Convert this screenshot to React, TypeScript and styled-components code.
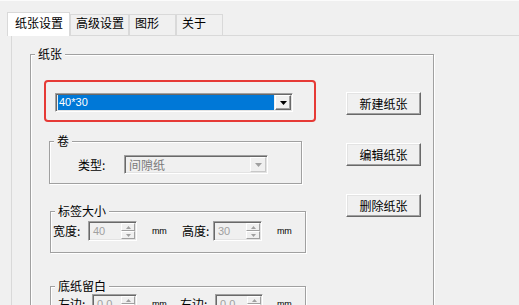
import React from 'react';
import styled, { createGlobalStyle } from 'styled-components';

const CJK = `"Noto Sans CJK SC", "Noto Sans", sans-serif`;
const LATIN = `"Liberation Sans", Arial, sans-serif`;

const GlobalStyle = createGlobalStyle`
  html, body { margin: 0; padding: 0; background: #f0f0f0; }
  body { overflow: hidden; }
`;

const Window = styled.div`
  width: 519px;
  height: 305px;
  overflow: hidden;
  box-sizing: border-box;
  border-top: 1px solid #fbfbfb;
  background: #f0f0f0;
  font-family: ${CJK};
  font-size: 12px;
  line-height: 12px;
  color: #000;
`;

const TabStrip = styled.div`
  display: flex;
  align-items: flex-end;
  height: 34px;
  padding-left: 9px;
  box-sizing: border-box;
`;

const Tab = styled.div<{ $active?: boolean }>`
  box-sizing: border-box;
  height: ${(p) => (p.$active ? 24 : 21)}px;
  min-width: 47px;
  padding: ${(p) => (p.$active ? '4px 6px 0 7px' : '2px 4px 0 5px')};
  margin: ${(p) => (p.$active ? '0 0 -1px -2px' : '0')};
  border: 1px solid #d9d9d9;
  border-bottom: none;
  background: ${(p) => (p.$active ? '#ffffff' : '#f0f0f0')};
  position: relative;
  z-index: ${(p) => (p.$active ? 1 : 0)};
  white-space: nowrap;
`;

const Panel = styled.div`
  margin-left: 11px;
  border-top: 1px solid #d9d9d9;
  border-left: 1px solid #d9d9d9;
  padding: 18px 0 0 18px;
  height: 300px;
`;

const Group = styled.div<{ $w: number; $h: number; $mt?: number; $ml?: number }>`
  position: relative;
  box-sizing: border-box;
  flex: none;
  width: ${(p) => p.$w}px;
  height: ${(p) => p.$h}px;
  margin: ${(p) => p.$mt ?? 0}px 0 0 ${(p) => p.$ml ?? 0}px;
  border: 1px solid #a0a0a0;
  box-shadow: inset 1px 1px 0 #ffffff, 1px 1px 0 #ffffff;
`;

const Legend = styled.div`
  position: absolute;
  top: -7px;
  left: 4px;
  padding: 0 3px;
  background: #f0f0f0;
  line-height: 12px;
  white-space: nowrap;
`;

const PaperBody = styled.div`
  display: flex;
  padding: 25px 0 0 13px;
`;

const LeftCol = styled.div`
  width: 272px;
  display: flex;
  flex-direction: column;
`;

const RightCol = styled.div`
  margin-left: 30px;
  padding-top: 12px;
  display: flex;
  flex-direction: column;
  gap: 28px;
`;

const Highlight = styled.div`
  box-sizing: border-box;
  width: 272px;
  height: 42px;
  border: 2px solid #e63a36;
  border-radius: 4px;
  padding: 11px 0 0 9px;
`;

const Combo = styled.div<{ $w: number }>`
  box-sizing: border-box;
  width: ${(p) => p.$w}px;
  height: 19px;
  flex: none;
  display: flex;
  border: 1px solid;
  border-color: #a0a0a0 #ffffff #ffffff #a0a0a0;
  box-shadow: inset 1px 1px 0 #696969, inset -1px -1px 0 #e3e3e3;
  padding: 1px 1px 1px 2px;
  background: #f0f0f0;
`;

const Selection = styled.div`
  flex: 1;
  background: #0078d7;
  color: #ffffff;
  font-family: ${LATIN};
  font-size: 11px;
  line-height: 15px;
  padding-left: 1px;
`;

const ComboText = styled.div`
  flex: 1;
  color: #7a7a7a;
  line-height: 15px;
  padding-left: 2px;
`;

const DropBtn = styled.div<{ $disabled?: boolean }>`
  box-sizing: border-box;
  width: 16px;
  margin-left: 1px;
  display: flex;
  align-items: center;
  justify-content: center;
  background: #f0f0f0;
  border: 1px solid;
  border-color: ${(p) =>
    p.$disabled ? '#ffffff #c8c8c8 #c8c8c8 #ffffff' : '#ffffff #696969 #696969 #ffffff'};
  box-shadow: ${(p) => (p.$disabled ? 'none' : 'inset -1px -1px 0 #a0a0a0')};
`;

const FieldRow = styled.div<{ $pt: number; $pl: number }>`
  display: flex;
  align-items: center;
  padding: ${(p) => p.$pt}px 0 0 ${(p) => p.$pl}px;
`;

const FieldLabel = styled.div<{ $w: number }>`
  width: ${(p) => p.$w}px;
  flex: none;
  white-space: nowrap;
`;

const Spin = styled.div<{ $w: number }>`
  box-sizing: border-box;
  width: ${(p) => p.$w}px;
  height: 20px;
  flex: none;
  display: flex;
  border: 1px solid;
  border-color: #a0a0a0 #ffffff #ffffff #a0a0a0;
  box-shadow: inset 1px 1px 0 #696969, inset -1px -1px 0 #e3e3e3;
  padding: 1px;
  background: #f0f0f0;
`;

const SpinValue = styled.div`
  flex: 1;
  display: flex;
  align-items: center;
  padding-left: 3px;
  font-family: ${LATIN};
  font-size: 11px;
  color: #a0a0a0;
`;

const SpinButtons = styled.div`
  width: 14px;
  display: flex;
  flex-direction: column;
`;

const SpinBtn = styled.div`
  flex: 1;
  box-sizing: border-box;
  display: flex;
  align-items: center;
  justify-content: center;
  border: 1px solid;
  border-color: #ffffff #a0a0a0 #a0a0a0 #ffffff;
  background: #f0f0f0;
`;

const Unit = styled.div<{ $ml: number; $w: number }>`
  margin-left: ${(p) => p.$ml}px;
  width: ${(p) => p.$w}px;
  flex: none;
  font-family: ${LATIN};
  font-size: 9px;
  letter-spacing: -0.2px;
`;

const Button = styled.div`
  box-sizing: border-box;
  width: 75px;
  height: 23px;
  display: flex;
  align-items: center;
  justify-content: center;
  background: #f0f0f0;
  border: 1px solid;
  border-color: #ffffff #696969 #696969 #ffffff;
  box-shadow: inset -1px -1px 0 #a0a0a0, inset 1px 1px 0 #e3e3e3;
  white-space: nowrap;
`;

const DownArrow = ({ color }: { color: string }) => (
  <svg width="7" height="4" viewBox="0 0 7 4">
    <path d="M0 0H7L3.5 4Z" fill={color} />
  </svg>
);

const TinyArrow = ({ up }: { up?: boolean }) => (
  <svg width="5" height="3" viewBox="0 0 5 3">
    <path d={up ? 'M0 3H5L2.5 0Z' : 'M0 0H5L2.5 3Z'} fill="#a0a0a0" />
  </svg>
);

const SpinBox = ({ w, value }: { w: number; value: string }) => (
  <Spin $w={w}>
    <SpinValue>{value}</SpinValue>
    <SpinButtons>
      <SpinBtn>
        <TinyArrow up />
      </SpinBtn>
      <SpinBtn>
        <TinyArrow />
      </SpinBtn>
    </SpinButtons>
  </Spin>
);

export default function App() {
  return (
    <>
      <GlobalStyle />
      <Window>
        <TabStrip>
          <Tab $active>纸张设置</Tab>
          <Tab>高级设置</Tab>
          <Tab>图形</Tab>
          <Tab>关于</Tab>
        </TabStrip>
        <Panel>
          <Group $w={404} $h={300}>
            <Legend>纸张</Legend>
            <PaperBody>
              <LeftCol>
                <Highlight>
                  <Combo $w={238}>
                    <Selection>40*30</Selection>
                    <DropBtn>
                      <DownArrow color="#000" />
                    </DropBtn>
                  </Combo>
                </Highlight>

                <Group $w={253} $h={43} $mt={19} $ml={5}>
                  <Legend>卷</Legend>
                  <FieldRow $pt={13} $pl={28}>
                    <FieldLabel $w={46}>类型:</FieldLabel>
                    <Combo $w={144}>
                      <ComboText>间隙纸</ComboText>
                      <DropBtn $disabled>
                        <DownArrow color="#a0a0a0" />
                      </DropBtn>
                    </Combo>
                  </FieldRow>
                </Group>

                <Group $w={256} $h={42} $mt={27} $ml={6}>
                  <Legend>标签大小</Legend>
                  <FieldRow $pt={9} $pl={2}>
                    <FieldLabel $w={35}>宽度:</FieldLabel>
                    <SpinBox w={49} value="40" />
                    <Unit $ml={15} $w={30}>mm</Unit>
                    <FieldLabel $w={31}>高度:</FieldLabel>
                    <SpinBox w={49} value="30" />
                    <Unit $ml={15} $w={20}>mm</Unit>
                  </FieldRow>
                </Group>

                <Group $w={256} $h={80} $mt={33} $ml={6}>
                  <Legend>底纸留白</Legend>
                  <FieldRow $pt={7} $pl={7}>
                    <FieldLabel $w={34}>左边:</FieldLabel>
                    <SpinBox w={45} value="0.0" />
                    <Unit $ml={15} $w={28}>mm</Unit>
                    <FieldLabel $w={35}>右边:</FieldLabel>
                    <SpinBox w={48} value="0.0" />
                    <Unit $ml={14} $w={20}>mm</Unit>
                  </FieldRow>
                </Group>
              </LeftCol>
              <RightCol>
                <Button>新建纸张</Button>
                <Button>编辑纸张</Button>
                <Button>删除纸张</Button>
              </RightCol>
            </PaperBody>
          </Group>
        </Panel>
      </Window>
    </>
  );
}
